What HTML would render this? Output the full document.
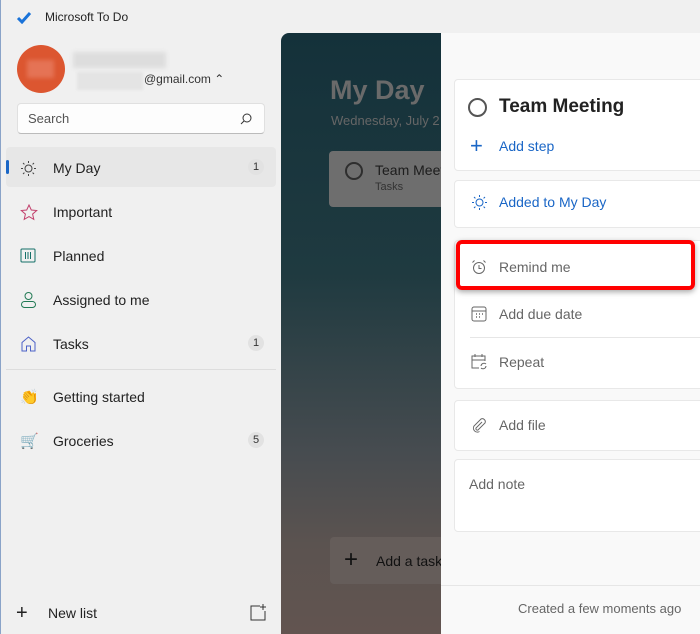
<!DOCTYPE html>
<html><head><style>
*{margin:0;padding:0;box-sizing:border-box}
body{width:700px;height:634px;overflow:hidden;font-family:"Segoe UI","Liberation Sans",sans-serif;background:#f0f0f0;position:relative;color:#222}
.a{position:absolute}
.nav{position:absolute;left:53px;font-size:14px;color:#222}
.ic{position:absolute;left:20px}
.badge{position:absolute;left:248px;width:16px;height:16px;border-radius:8px;background:#e2e2e2;font-size:11px;text-align:center;line-height:16px;color:#333}
.card{position:absolute;left:454px;width:260px;background:#fff;border:1px solid #e8e8e8;border-radius:4px}
.row{position:absolute;left:499px;font-size:14px;color:#666}
</style></head><body>
<div class="a" style="left:0;top:0;width:1px;height:634px;background:#8aa3c8"></div>
<svg class="a" style="left:16px;top:12px" width="16" height="12"><path d="M2 6l4 4 8-9" stroke="#1a73d9" stroke-width="3" fill="none"/></svg>
<div class="a" style="left:45px;top:10px;font-size:12px;color:#222">Microsoft To Do</div>
<div class="a" style="left:17px;top:45px;width:48px;height:48px;border-radius:50%;background:#dc5630"></div>
<div class="a" style="left:27px;top:60px;width:27px;height:18px;background:#e57355;filter:blur(2px)"></div>
<div class="a" style="left:73px;top:52px;width:93px;height:16px;background:#ddd;filter:blur(2px)"></div>
<div class="a" style="left:77px;top:72px;width:66px;height:18px;background:#e4e4e4;filter:blur(1px)"></div>
<div class="a" style="left:144px;top:72px;font-size:12px;color:#333">@gmail.com ⌃</div>
<div class="a" style="left:17px;top:103px;width:248px;height:31px;background:#fdfdfd;border:1px solid #e0e0e0;border-bottom-color:#bbb;border-radius:4px"></div>
<div class="a" style="left:28px;top:111px;font-size:13px;color:#555">Search</div>
<svg class="a" style="left:240px;top:113px" width="12" height="12"><circle cx="7" cy="5" r="4" stroke="#333" fill="none"/><path d="M4 8l-3 3" stroke="#333"/></svg>
<div class="a" style="left:6px;top:147px;width:270px;height:40px;background:#e7e7e7;border-radius:4px"></div>
<div class="a" style="left:6px;top:160px;width:3px;height:14px;background:#1a66c6;border-radius:2px"></div>
<svg class="ic" style="top:160px" width="17" height="17"><circle cx="8.5" cy="8.5" r="3.5" stroke="#444" fill="none"/><path d="M8.5 1v2M8.5 14v2M1 8.5h2M14 8.5h2M3 3l1.4 1.4M12.6 12.6L14 14M3 14l1.4-1.4M12.6 4.4L14 3" stroke="#444"/></svg>
<div class="nav" style="top:160px">My Day</div><div class="badge" style="top:159px">1</div>
<svg class="ic" style="top:204px" width="18" height="17"><path d="M9 1l2.3 5 5.4.5-4.1 3.6 1.2 5.3L9 12.6l-4.8 2.8 1.2-5.3L1.3 6.5 6.7 6z" stroke="#c2406c" fill="none"/></svg>
<div class="nav" style="top:204px">Important</div>
<svg class="ic" style="top:248px" width="17" height="16"><rect x="1" y="1" width="14" height="13" rx="1" stroke="#157068" fill="none"/><path d="M5.5 4v7M8 4v7M10.5 4v7" stroke="#157068"/></svg>
<div class="nav" style="top:248px">Planned</div>
<svg class="ic" style="top:291px" width="17" height="18"><circle cx="8.5" cy="5" r="3.5" stroke="#227a55" fill="none"/><rect x="1.5" y="10.5" width="14" height="6" rx="3" stroke="#227a55" fill="none"/></svg>
<div class="nav" style="top:292px">Assigned to me</div>
<svg class="ic" style="top:335px" width="17" height="17"><path d="M2 7.5L8.5 2 15 7.5V16h-4.5v-5h-4v5H2z" stroke="#4d62c7" fill="none"/></svg>
<div class="nav" style="top:336px">Tasks</div><div class="badge" style="top:335px">1</div>
<div class="a" style="left:6px;top:369px;width:270px;height:1px;background:#ddd"></div>
<div class="a" style="left:20px;top:388px;font-size:15px">👏</div>
<div class="nav" style="top:389px">Getting started</div>
<div class="a" style="left:20px;top:432px;font-size:15px">🛒</div>
<div class="nav" style="top:433px">Groceries</div><div class="badge" style="top:432px">5</div>
<div class="a" style="left:16px;top:603px;font-size:20px;font-weight:300;line-height:20px">+</div>
<div class="nav" style="left:48px;top:605px">New list</div>
<svg class="a" style="left:249px;top:604px" width="17" height="17"><path d="M11 2H2v14h14V7" stroke="#333" fill="none"/><path d="M14 0v6M11 3h6" stroke="#333"/></svg>

<div class="a" style="left:281px;top:33px;width:160px;height:601px;border-top-left-radius:8px;background:linear-gradient(#14313a 0%,#1f3a40 40%,#474c50 70%,#5b5350 85%,#625450 100%)"></div>
<div class="a" style="left:330px;top:75px;font-size:27px;font-weight:600;color:#6a6a6a">My Day</div>
<div class="a" style="left:331px;top:113px;font-size:13px;color:#666;white-space:nowrap;width:110px;overflow:hidden">Wednesday, July 2</div>
<div class="a" style="left:329px;top:151px;width:112px;height:56px;background:#6e6e6e;border-radius:4px 0 0 4px"></div>
<div class="a" style="left:345px;top:162px;width:18px;height:18px;border:2px solid #2e2e2e;border-radius:50%"></div>
<div class="a" style="left:375px;top:162px;font-size:14px;color:#1c1c1c;white-space:nowrap;width:66px;overflow:hidden">Team Meeting</div>
<div class="a" style="left:375px;top:181px;font-size:11px;color:#333">Tasks</div>
<div class="a" style="left:330px;top:537px;width:111px;height:47px;background:#655d5a;border-radius:4px 0 0 4px"></div>
<div class="a" style="left:344px;top:546px;font-size:24px;font-weight:300;color:#111">+</div>
<div class="a" style="left:376px;top:553px;font-size:14px;color:#111;white-space:nowrap;width:65px;overflow:hidden">Add a task</div>

<div class="a" style="left:441px;top:33px;width:259px;height:601px;background:#f9f9f9"></div>
<div class="card" style="top:79px;height:92px"></div>
<div class="a" style="left:468px;top:98px;width:19px;height:19px;border:2px solid #555;border-radius:50%"></div>
<div class="a" style="left:499px;top:96px;font-size:19px;font-weight:600;color:#222">Team Meeting</div>
<div class="a" style="left:470px;top:133px;font-size:22px;font-weight:300;color:#1a66c6">+</div>
<div class="row" style="top:138px;color:#1a66c6">Add step</div>
<div class="card" style="top:180px;height:48px"></div>
<svg class="a" style="left:471px;top:194px" width="17" height="17"><circle cx="8.5" cy="8.5" r="3.5" stroke="#1a66c6" fill="none"/><path d="M8.5 1v2M8.5 14v2M1 8.5h2M14 8.5h2M3 3l1.4 1.4M12.6 12.6L14 14M3 14l1.4-1.4M12.6 4.4L14 3" stroke="#1a66c6"/></svg>
<div class="row" style="top:194px;color:#1a66c6">Added to My Day</div>
<div class="card" style="top:240px;height:149px"></div>
<div class="a" style="left:470px;top:337px;width:230px;height:1px;background:#e6e6e6"></div>
<div class="a" style="left:456px;top:240px;width:239px;height:50px;border:4px solid #f00;border-radius:6px;box-shadow:0 2px 6px rgba(0,0,0,.35)"></div>
<svg class="a" style="left:471px;top:259px" width="16" height="16"><circle cx="8" cy="9" r="5.5" stroke="#666" fill="none"/><path d="M8 6v3.5h2.5M1.5 3.5l2-2M14.5 3.5l-2-2" stroke="#666" fill="none"/></svg>
<div class="row" style="top:259px">Remind me</div>
<svg class="a" style="left:471px;top:306px" width="16" height="16"><rect x="1" y="1" width="14" height="14" rx="2" stroke="#666" fill="none"/><path d="M1 5h14" stroke="#666"/><path d="M5 8h1M8 8h1M11 8h1M5 11h1M8 11h1" stroke="#666" stroke-width="1.5"/></svg>
<div class="row" style="top:306px">Add due date</div>
<svg class="a" style="left:471px;top:353px" width="17" height="17"><path d="M8 15H1V3h13v5M1 7h13M4 1v3M11 1v3" stroke="#666" fill="none"/><path d="M10 13a3 3 0 0 1 5-2M15 13a3 3 0 0 1-5 2" stroke="#666" fill="none"/></svg>
<div class="row" style="top:354px">Repeat</div>
<div class="card" style="top:400px;height:51px"></div>
<svg class="a" style="left:471px;top:417px" width="16" height="16"><path d="M11 5l-6 6a1.5 1.5 0 0 0 2 2l7-7a3 3 0 0 0-4-4L3 9a4 4 0 0 0 5.5 5.5" stroke="#666" fill="none"/></svg>
<div class="row" style="top:417px">Add file</div>
<div class="card" style="top:459px;height:73px"></div>
<div class="a" style="left:469px;top:476px;font-size:14px;color:#666">Add note</div>
<div class="a" style="left:441px;top:585px;width:259px;height:1px;background:#e6e6e6"></div>
<div class="a" style="left:518px;top:601px;font-size:13px;color:#666">Created a few moments ago</div>
</body></html>
